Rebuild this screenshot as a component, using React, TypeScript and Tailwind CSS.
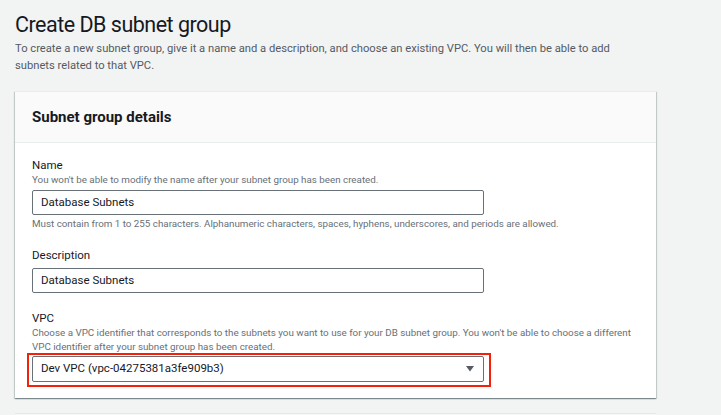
import React from "react";

const font = { fontFamily: "Roboto, 'Open Sans', sans-serif" };

function Field({
  label,
  hint,
  children,
  after,
  className = "",
}: {
  label: string;
  hint?: string;
  children: React.ReactNode;
  after?: string;
  className?: string;
}) {
  return (
    <div className={className}>
      <div className="text-[11.5px] leading-[16px] text-[#16191f]">{label}</div>
      {hint && (
        <div className="w-[606px] text-[9.8px] leading-[14px] text-[#687078]">{hint}</div>
      )}
      {children}
      {after && (
        <div className="mt-[2px] text-[9.8px] leading-[14px] text-[#687078]">{after}</div>
      )}
    </div>
  );
}

export default function App() {
  return (
    <div className="min-h-[415px] bg-[#f2f3f3] pl-[15px]" style={font}>
      <h1 className="pt-[11px] text-[21.5px] leading-[28px] tracking-[-0.5px] text-[#16191f]">
        Create DB subnet group
      </h1>
      <p className="mt-[1px] w-[626px] text-[11.2px] leading-[17px] text-[#545b64]">
        To create a new subnet group, give it a name and a description, and choose an existing
        VPC. You will then be able to add subnets related to that VPC.
      </p>

      <div className="mt-[17px] w-[641px] border-t border-[#eaeded] bg-white shadow-[0_1px_1px_0_rgba(0,28,36,0.3),1px_1px_1px_0_rgba(0,28,36,0.15),-1px_1px_1px_0_rgba(0,28,36,0.15)]">
        <div className="flex h-[51px] items-center border-b border-[#eaeded] bg-[#fafafa] px-[17px]">
          <h2 className="text-[15px] font-bold leading-[20px] text-[#16191f]">
            Subnet group details
          </h2>
        </div>

        <div className="px-[17px] pt-[14px] pb-[16px]">
          <Field
            label="Name"
            hint="You won't be able to modify the name after your subnet group has been created."
            after="Must contain from 1 to 255 characters. Alphanumeric characters, spaces, hyphens, underscores, and periods are allowed."
          >
            <div className="mt-[3px] flex h-[25px] w-[452px] items-center rounded-[2px] border border-[#687078] px-[8px] text-[11.5px] text-[#16191f]">
              Database Subnets
            </div>
          </Field>

          <Field label="Description" className="mt-[16px]">
            <div className="mt-[5px] flex h-[25px] w-[452px] items-center rounded-[2px] border border-[#687078] px-[8px] text-[11.5px] text-[#16191f]">
              Database Subnets
            </div>
          </Field>

          <Field
            label="VPC"
            hint="Choose a VPC identifier that corresponds to the subnets you want to use for your DB subnet group. You won't be able to choose a different VPC identifier after your subnet group has been created."
            className="mt-[17px]"
          >
            <div className="relative mt-[2px] w-[452px]">
              <div className="flex h-[26px] items-center justify-between rounded-[2px] border border-[#687078] pl-[8px] pr-[9px] text-[11.5px] text-[#16191f]">
                <span>Dev VPC (vpc-04275381a3fe909b3)</span>
                <svg width="8" height="6" viewBox="0 0 8 6">
                  <path d="M0 0 H8 L4 5.5 Z" fill="#545b64" />
                </svg>
              </div>
              <div className="pointer-events-none absolute -left-[5px] -right-[7px] -top-[3px] -bottom-[5px] border-2 border-[#f5200a]" />
            </div>
          </Field>
        </div>
      </div>

      <div className="mt-[15px] h-[20px] w-[641px] border-t border-[#e4e7e7] bg-[#f7f8f8]" />
    </div>
  );
}
